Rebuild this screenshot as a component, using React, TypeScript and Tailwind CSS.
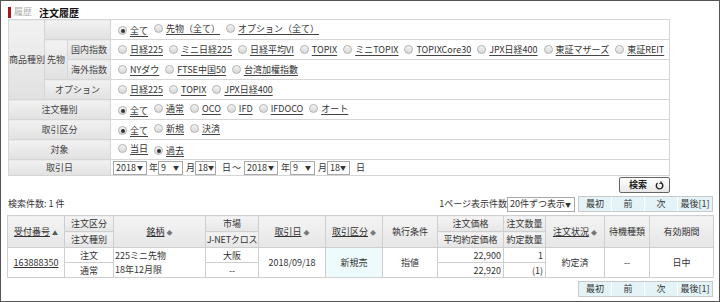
import React from 'react';

const font = { fontFamily: '"Noto Sans CJK JP", "Noto Sans", sans-serif' };

const Radio = ({ checked = false }: { checked?: boolean }) => (
  <span className="inline-flex items-center justify-center w-[9px] h-[9px] rounded-full border border-[#b4b4b4] bg-linear-to-b from-[#f4f4f4] to-[#d8d8d8] shrink-0">
    {checked && <span className="block w-[4px] h-[4px] rounded-full bg-[#333]" />}
  </span>
);

const Option = ({ label, checked }: { label: string; checked?: boolean }) => (
  <span className="inline-flex items-center mr-[6px]">
    <Radio checked={checked} />
    <span className="ml-[1px] pl-[2px] underline underline-offset-2 decoration-[#444]">{label}</span>
  </span>
);

const Sel = ({ value, w }: { value: string; w: string }) => (
  <span className={`inline-flex items-center justify-between h-[14px] border border-[#a9a9a9] bg-white pl-[2px] pr-[3px] ${w}`}>
    <span>{value}</span>
    <span className="text-[6px] leading-none">▼</span>
  </span>
);

const Pager = () => (
  <div className="flex border border-[#c9c9c9] h-[16px] text-[#333]">
    <span className="w-[33px] flex items-center justify-center bg-[#e4f3f7] border-r border-white">最初</span>
    <span className="w-[33px] flex items-center justify-center bg-[#e4f3f7] border-r border-white">前</span>
    <span className="w-[33px] flex items-center justify-center bg-[#e4f3f7] border-r border-white">次</span>
    <span className="w-[34px] flex items-center justify-center bg-[#e4f3f7]">最後[1]</span>
  </div>
);

const lbl = 'bg-linear-to-b from-[#f2f2f2] to-[#e1e1e1] border border-[#d6d6d6] text-center text-[#444] p-0 whitespace-nowrap';
const val = 'border border-[#d6d6d6] bg-white pl-[7px] p-0 whitespace-nowrap';
const th = 'bg-linear-to-b from-[#f4f4f4] to-[#e6e6e6] border border-[#cfcfcf] text-center font-normal p-0 whitespace-nowrap';
const td = 'border border-[#cfcfcf] p-0 whitespace-nowrap';

const App = () => {
  return (
    <div className="w-[720px] h-[302px] border border-[#555] bg-white text-[9px] text-[#333] overflow-hidden" style={font}>
      <div className="flex items-center h-[14px] mt-[4px] ml-[7px]">
        <span className="w-[3px] h-[11px] bg-[#a3161b]" />
        <span className="ml-[3px] text-[#aaa]">履歴</span>
        <span className="ml-[7px] text-[10px] font-bold text-[#111]">注文履歴</span>
      </div>

      <table className="ml-[7px] w-[662px] table-fixed border-collapse border border-[#c8c8c8] leading-none">
        <colgroup>
          <col className="w-[36px]" />
          <col className="w-[23px]" />
          <col className="w-[43px]" />
          <col />
        </colgroup>
        <tbody>
          <tr className="h-[20px]">
            <td rowSpan={4} className={lbl}>商品種別</td>
            <td colSpan={2} className={lbl}></td>
            <td className={val}>
              <Option label="全て" checked />
              <Option label="先物（全て）" />
              <Option label="オプション（全て）" />
            </td>
          </tr>
          <tr className="h-[20px]">
            <td rowSpan={2} className={lbl}>先物</td>
            <td className={lbl}>国内指数</td>
            <td className={val}>
              <Option label="日経225" />
              <Option label="ミニ日経225" />
              <Option label="日経平均VI" />
              <Option label="TOPIX" />
              <Option label="ミニTOPIX" />
              <Option label="TOPIXCore30" />
              <Option label="JPX日経400" />
              <Option label="東証マザーズ" />
              <Option label="東証REIT" />
            </td>
          </tr>
          <tr className="h-[20px]">
            <td className={lbl}>海外指数</td>
            <td className={val}>
              <Option label="NYダウ" />
              <Option label="FTSE中国50" />
              <Option label="台湾加權指數" />
            </td>
          </tr>
          <tr className="h-[20px]">
            <td colSpan={2} className={lbl}>オプション</td>
            <td className={val}>
              <Option label="日経225" />
              <Option label="TOPIX" />
              <Option label="JPX日経400" />
            </td>
          </tr>
          <tr className="h-[20px]">
            <td colSpan={3} className={lbl}>注文種別</td>
            <td className={val}>
              <Option label="全て" checked />
              <Option label="通常" />
              <Option label="OCO" />
              <Option label="IFD" />
              <Option label="IFDOCO" />
              <Option label="オート" />
            </td>
          </tr>
          <tr className="h-[20px]">
            <td colSpan={3} className={lbl}>取引区分</td>
            <td className={val}>
              <Option label="全て" checked />
              <Option label="新規" />
              <Option label="決済" />
            </td>
          </tr>
          <tr className="h-[20px]">
            <td colSpan={3} className={lbl}>対象</td>
            <td className={val}>
              <Option label="当日" />
              <Option label="過去" checked />
            </td>
          </tr>
          <tr className="h-[16px]">
            <td colSpan={3} className={lbl}>取引日</td>
            <td className="border border-[#d6d6d6] bg-white pl-[2px] p-0">
              <div className="flex items-center">
                <Sel value="2018" w="w-[34px]" />
                <span className="ml-[2px]">年</span>
                <Sel value="9" w="w-[25px]" />
                <span className="ml-[3px]">月</span>
                <Sel value="18" w="w-[21px]" />
                <span className="ml-[6px]">日</span>
                <span className="ml-[1px]">～</span>
                <span className="ml-[3px]" />
                <Sel value="2018" w="w-[34px]" />
                <span className="ml-[3px]">年</span>
                <Sel value="9" w="w-[25px]" />
                <span className="ml-[3px]">月</span>
                <Sel value="18" w="w-[23px]" />
                <span className="ml-[6px]">日</span>
              </div>
            </td>
          </tr>
        </tbody>
      </table>

      <div className="w-[669px] flex justify-end mt-[1px]">
        <div className="w-[51px] h-[16px] flex items-center justify-end gap-[8px] pr-[5px] border border-[#666] rounded-[2px] bg-linear-to-b from-white to-[#e8e8e8] font-bold text-[#222]">
          <span>検索</span>
          <svg width="9" height="9" viewBox="0 0 10 10" fill="none" stroke="#222" strokeWidth="1.6">
            <path d="M3 2.2 A3.6 3.6 0 1 0 6.8 2" />
            <path d="M6.5 0.4 L6.8 2.4 L4.8 2.8" strokeWidth="1.3" />
          </svg>
        </div>
      </div>

      <div className="w-[712px] flex items-center justify-between mt-[3px] pl-[7px] whitespace-nowrap">
        <span>検索件数: 1 件</span>
        <div className="flex items-center">
          <span>1ページ表示件数</span>
          <span className="inline-flex items-center justify-between h-[15px] w-[68px] border border-[#a9a9a9] bg-white pl-[2px] pr-[4px] mr-[3px]">
            <span>20件ずつ表示</span>
            <span className="text-[6px]">▼</span>
          </span>
          <Pager />
        </div>
      </div>

      <table className="ml-[6px] mt-[3px] w-[706px] table-fixed border-collapse border border-[#c6c6c6] leading-none">
        <colgroup>
          <col className="w-[57px]" />
          <col className="w-[49px]" />
          <col className="w-[92px]" />
          <col className="w-[53px]" />
          <col className="w-[67px]" />
          <col className="w-[57px]" />
          <col className="w-[55px]" />
          <col className="w-[66px]" />
          <col className="w-[42px]" />
          <col className="w-[59px]" />
          <col className="w-[45px]" />
          <col className="w-[64px]" />
        </colgroup>
        <thead>
          <tr className="h-[16px]">
            <th rowSpan={2} className={th}><span className="underline">受付番号</span> <span className="text-[6px] text-[#555]">▲</span></th>
            <th className={th}>注文区分</th>
            <th rowSpan={2} className={th}><span className="underline">銘柄</span> <span className="text-[6px] text-[#777]">◆</span></th>
            <th className={th}>市場</th>
            <th rowSpan={2} className={th}><span className="underline">取引日</span> <span className="text-[6px] text-[#777]">◆</span></th>
            <th rowSpan={2} className={th}><span className="underline">取引区分</span> <span className="text-[6px] text-[#777]">◆</span></th>
            <th rowSpan={2} className={th}>執行条件</th>
            <th className={th}>注文価格</th>
            <th className={th}>注文数量</th>
            <th rowSpan={2} className={th}><span className="underline">注文状況</span> <span className="text-[6px] text-[#777]">◆</span></th>
            <th rowSpan={2} className={th}>待機種類</th>
            <th rowSpan={2} className={th}>有効期間</th>
          </tr>
          <tr className="h-[16px]">
            <th className={th}>注文種別</th>
            <th className={`${th} tracking-[-0.2px]`}>J-NETクロス</th>
            <th className={th}>平均約定価格</th>
            <th className={th}>約定数量</th>
          </tr>
        </thead>
        <tbody>
          <tr className="h-[15px]">
            <td rowSpan={2} className={`${td} text-center`}><span className="underline">163888350</span></td>
            <td className={`${td} text-center`}>注文</td>
            <td rowSpan={2} className={`${td} pl-[1px] leading-[14px]`}>225ミニ先物<br />18年12月限</td>
            <td className={`${td} text-center`}>大阪</td>
            <td rowSpan={2} className={`${td} text-center`}>2018/09/18</td>
            <td rowSpan={2} className={`${td} text-center bg-[#eefbfd]`}>新規売</td>
            <td rowSpan={2} className={`${td} text-center`}>指値</td>
            <td className={`${td} text-right pr-[2px]`}>22,900</td>
            <td className={`${td} text-right pr-[2px]`}>1</td>
            <td rowSpan={2} className={`${td} text-center`}>約定済</td>
            <td rowSpan={2} className={`${td} text-center`}>--</td>
            <td rowSpan={2} className={`${td} text-center`}>日中</td>
          </tr>
          <tr className="h-[15px]">
            <td className={`${td} text-center`}>通常</td>
            <td className={`${td} text-center`}>--</td>
            <td className={`${td} text-right pr-[2px]`}>22,920</td>
            <td className={`${td} text-right pr-[2px]`}>(1)</td>
          </tr>
        </tbody>
      </table>

      <div className="w-[712px] flex justify-end mt-[3px]">
        <Pager />
      </div>
    </div>
  );
};

export default App;
